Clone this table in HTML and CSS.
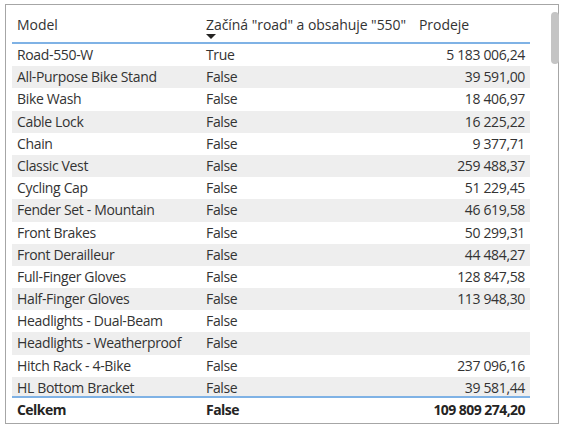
FILE: index.html
```html
<!DOCTYPE html>
<html lang="cs">
<head>
<meta charset="utf-8">
<link rel="stylesheet" href="styles.css">
</head>
<body>
<div class="visual">
  <div class="table">
    <div class="head">
      <div class="hcell">Model</div>
      <div class="hcell sorted">Začíná "road" a obsahuje "550"<span class="arrow"></span></div>
      <div class="hcell">Prodeje</div>
    </div>
    <div class="body">
      <div class="row"><span>Road-550-W</span><span>True</span><span class="num">5 183 006,24</span></div>
      <div class="row alt"><span>All-Purpose Bike Stand</span><span>False</span><span class="num">39 591,00</span></div>
      <div class="row"><span>Bike Wash</span><span>False</span><span class="num">18 406,97</span></div>
      <div class="row alt"><span>Cable Lock</span><span>False</span><span class="num">16 225,22</span></div>
      <div class="row"><span>Chain</span><span>False</span><span class="num">9 377,71</span></div>
      <div class="row alt"><span>Classic Vest</span><span>False</span><span class="num">259 488,37</span></div>
      <div class="row"><span>Cycling Cap</span><span>False</span><span class="num">51 229,45</span></div>
      <div class="row alt"><span>Fender Set - Mountain</span><span>False</span><span class="num">46 619,58</span></div>
      <div class="row"><span>Front Brakes</span><span>False</span><span class="num">50 299,31</span></div>
      <div class="row alt"><span>Front Derailleur</span><span>False</span><span class="num">44 484,27</span></div>
      <div class="row"><span>Full-Finger Gloves</span><span>False</span><span class="num">128 847,58</span></div>
      <div class="row alt"><span>Half-Finger Gloves</span><span>False</span><span class="num">113 948,30</span></div>
      <div class="row"><span>Headlights - Dual-Beam</span><span>False</span><span class="num"></span></div>
      <div class="row alt"><span>Headlights - Weatherproof</span><span>False</span><span class="num"></span></div>
      <div class="row"><span>Hitch Rack - 4-Bike</span><span>False</span><span class="num">237 096,16</span></div>
      <div class="row alt"><span>HL Bottom Bracket</span><span>False</span><span class="num">39 581,44</span></div>
    </div>
    <div class="total"><span>Celkem</span><span>False</span><span class="num">109 809 274,20</span></div>
  </div>
  <div class="scroll"><div class="thumb"></div></div>
</div>
</body>
</html>
```
FILE: styles.css
```css
html, body { margin: 0; padding: 0; background: #fff; }
body { padding: 4px 0 0 5px; }
.visual {
  box-sizing: border-box;
  width: 554px;
  height: 420px;
  border: 1px solid #a6a6a6;
  display: flex;
  font-family: "Open Sans", "Noto Sans", sans-serif;
  font-size: 14px;
  color: #333333;
}
.table {
  width: 518px;
  margin-left: 6px;
  display: flex;
  flex-direction: column;
}
.head, .row, .total {
  display: grid;
  grid-template-columns: 189px 213px 116px;
}
.head {
  height: 37px;
  border-bottom: 2px solid #7fb2e5;
  color: #333;
}
.hcell {
  padding: 10px 0 0 5px;
  white-space: nowrap;
  position: relative;
  letter-spacing: -0.05px;
}
.arrow {
  position: absolute;
  left: 5px;
  top: 29px;
  width: 0; height: 0;
  border-left: 5px solid transparent;
  border-right: 5px solid transparent;
  border-top: 5px solid #252423;
}
.body {
  height: 352px;
  overflow: hidden;
}
.row {
  height: 22.2px;
  line-height: 22.2px;
  white-space: nowrap;
  letter-spacing: -0.35px;
}
.row span, .total span { padding-left: 5px; }
.row .num, .total .num { text-align: right; padding-right: 5px; }
.alt { background: #eeeeee; }
.total {
  border-top: 2px solid #7fb2e5;
  height: 23px;
  line-height: 23px;
  font-weight: bold;
  color: #252423;
  letter-spacing: -0.55px;
}
.scroll {
  width: 10px;
  margin-left: 21px;
  padding-top: 7px;
}
.thumb {
  width: 8px;
  height: 52px;
  border-radius: 4px;
  background: #c4c4c4;
}
```
